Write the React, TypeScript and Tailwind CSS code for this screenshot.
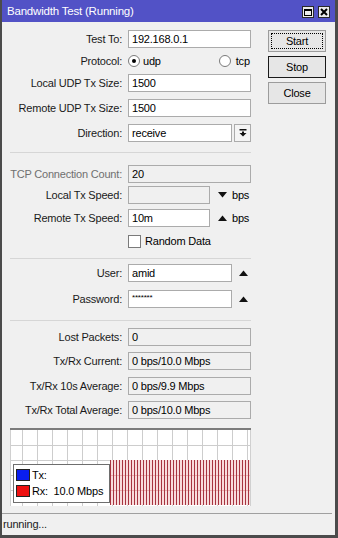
import React from 'react';

type RowProps = { label: string; className?: string; dim?: boolean; children: React.ReactNode };

function Row({ label, className = '', dim = false, children }: RowProps) {
  return (
    <div className={`flex items-center h-[18px] ${className}`}>
      <span className={`w-[120px] text-right whitespace-nowrap ${dim ? 'text-[#6f6f6f]' : 'text-[#1a1a1a]'}`}>{label}</span>
      <div className="ml-[6px] flex items-center">{children}</div>
    </div>
  );
}

function Field({ value, w = 'w-[123px]', disabled = false, small = false }: { value?: string; w?: string; disabled?: boolean; small?: boolean }) {
  return (
    <div className={`${w} h-[18px] border border-[#ababab] pl-[3px] whitespace-nowrap overflow-hidden ${small ? 'text-[8px] leading-[14px]' : 'leading-[16px]'} ${disabled ? 'bg-[#f0f0f0]' : 'bg-white'}`}>
      {value}
    </div>
  );
}

const Tri = ({ up }: { up?: boolean }) => (
  <svg width="9" height="6" viewBox="0 0 9 6">
    {up ? <polygon points="0,6 9,6 4.5,0.5" fill="#111" /> : <polygon points="0,0 9,0 4.5,5.5" fill="#111" />}
  </svg>
);

const Separator = ({ className }: { className: string }) => (
  <div className={`ml-[8px] w-[241px] h-px bg-[#d6d6d6] ${className}`} />
);

function Radio({ checked }: { checked?: boolean }) {
  return (
    <div className="w-[12px] h-[12px] rounded-full border border-[#7a7a7a] bg-white flex items-center justify-center">
      {checked && <div className="w-[4px] h-[4px] rounded-full bg-black" />}
    </div>
  );
}

function Graph() {
  const vlines = Array.from({ length: 16 }, (_, i) => 12 + i * 15);
  const hlines = [17, 32, 47, 62];
  const stripes = Array.from({ length: 47 }, (_, i) => 100 + i * 3);
  return (
    <div className="relative ml-[8px] mt-[9px] w-[241px] h-[78px]">
      <svg width="241" height="78" viewBox="0 0 241 78" className="block">
        <rect x="0" y="0" width="241" height="78" fill="#fff" />
        {vlines.map((x) => (
          <line key={`v${x}`} x1={x + 0.5} y1="2" x2={x + 0.5} y2="78" stroke="#cdcdcd" />
        ))}
        {hlines.map((y) => (
          <line key={`h${y}`} x1="0" y1={y + 0.5} x2="241" y2={y + 0.5} stroke="#cdcdcd" />
        ))}
        <rect x="100" y="32" width="141" height="45" fill="#f8dcdc" />
        {[47, 62].map((y) => (
          <line key={`r${y}`} x1="100" y1={y + 0.5} x2="241" y2={y + 0.5} stroke="#eab0b0" />
        ))}
        {stripes.map((x) => (
          <line key={`s${x}`} x1={x + 0.5} y1="32" x2={x + 0.5} y2="77" stroke="#a63440" />
        ))}
        <line x1="0.5" y1="0" x2="0.5" y2="78" stroke="#d0d0d0" />
        <line x1="240.5" y1="0" x2="240.5" y2="78" stroke="#d0d0d0" />
        <rect x="0" y="0" width="241" height="2" fill="#7c7c7c" />
      </svg>
      <div className="absolute left-[3px] top-[36px] w-[97px] h-[39px] bg-white border border-[#6e6e6e] px-[2px] pt-[3px]">
        <div className="flex items-center h-[14px]">
          <div className="w-[14px] h-[12px] bg-[#0a1ef0] border border-[#222]" />
          <span className="ml-[2px] text-black">Tx:</span>
        </div>
        <div className="flex items-center h-[14px] mt-[2px]">
          <div className="w-[14px] h-[12px] bg-[#ee1111] border border-[#222]" />
          <span className="ml-[2px] text-black whitespace-pre">Rx:  10.0 Mbps</span>
        </div>
      </div>
    </div>
  );
}

export default function App() {
  return (
    <div className="w-[338px] h-[538px] flex flex-col bg-[#f0f0f0] border-l-2 border-r-[3px] border-b-[3px] border-[#4b4b4b] text-[11px] tracking-[-0.2px] font-['Liberation_Sans',Arial,sans-serif] overflow-hidden">
      {/* title bar */}
      <div className="h-[22px] shrink-0 bg-[#5252c6] flex items-center pl-[5px] pr-[5px]">
        <span className="text-white text-[11.5px] pt-[1px]">Bandwidth Test (Running)</span>
        <div className="ml-auto flex gap-[4px] pt-[2px]">
          <div className="w-[12px] h-[12px] bg-[#ececec] border border-[#2a2a2a] flex items-center justify-center">
            <div className="w-[8px] h-[7px] border border-black border-t-2" />
          </div>
          <div className="w-[12px] h-[12px] bg-[#ececec] border border-[#2a2a2a] flex items-center justify-center">
            <svg width="8" height="8" viewBox="0 0 8 8">
              <path d="M1 1 L7 7 M7 1 L1 7" stroke="#000" strokeWidth="2" />
            </svg>
          </div>
        </div>
      </div>

      {/* body */}
      <div className="flex-1 flex pt-[8px]">
        <div className="w-[249px] flex flex-col">
          <Row label="Test To:">
            <Field value="192.168.0.1" />
          </Row>
          <Row label="Protocol:" className="mt-[4px]">
            <div className="w-[123px] flex items-center">
              <Radio checked />
              <span className="ml-[3px]">udp</span>
              <div className="ml-[58px]">
                <Radio />
              </div>
              <span className="ml-[5px]">tcp</span>
            </div>
          </Row>
          <Row label="Local UDP Tx Size:" className="mt-[4px]">
            <Field value="1500" />
          </Row>
          <Row label="Remote UDP Tx Size:" className="mt-[7px]">
            <Field value="1500" />
          </Row>
          <Row label="Direction:" className="mt-[7px]">
            <Field value="receive" w="w-[104px]" />
            <div className="ml-[2px] w-[17px] h-[18px] border border-[#ababab] bg-[#f4f4f4] flex items-center justify-center">
              <svg width="8" height="8" viewBox="0 0 8 8">
                <rect x="0.5" y="0" width="7" height="1.5" fill="#111" />
                <rect x="3" y="2.5" width="2" height="2" fill="#111" />
                <polygon points="0.5,4 7.5,4 4,7.5" fill="#111" />
              </svg>
            </div>
          </Row>

          <Separator className="mt-[10px]" />

          <Row label="TCP Connection Count:" dim className="mt-[12px]">
            <Field value="20" disabled />
          </Row>
          <Row label="Local Tx Speed:" className="mt-[3px]">
            <Field w="w-[82px]" disabled />
            <div className="ml-[8px]"><Tri /></div>
            <span className="ml-[5px]">bps</span>
          </Row>
          <Row label="Remote Tx Speed:" className="mt-[5px]">
            <Field value="10m" w="w-[82px]" />
            <div className="ml-[8px]"><Tri up /></div>
            <span className="ml-[5px]">bps</span>
          </Row>
          <div className="flex items-center h-[13px] mt-[8px] ml-[126px]">
            <div className="w-[13px] h-[13px] border border-[#7a7a7a] bg-white" />
            <span className="ml-[4px]">Random Data</span>
          </div>

          <Separator className="mt-[10px]" />

          <Row label="User:" className="mt-[5px]">
            <Field value="amid" w="w-[104px]" />
            <div className="ml-[7px]"><Tri up /></div>
          </Row>
          <Row label="Password:" className="mt-[8px]">
            <Field value="*******" w="w-[104px]" small />
            <div className="ml-[7px]"><Tri up /></div>
          </Row>

          <Separator className="mt-[12px]" />

          <Row label="Lost Packets:" className="mt-[7px]">
            <Field value="0" disabled />
          </Row>
          <Row label="Tx/Rx Current:" className="mt-[6px]">
            <Field value="0 bps/10.0 Mbps" disabled />
          </Row>
          <Row label="Tx/Rx 10s Average:" className="mt-[7px]">
            <Field value="0 bps/9.9 Mbps" disabled />
          </Row>
          <Row label="Tx/Rx Total Average:" className="mt-[6px]">
            <Field value="0 bps/10.0 Mbps" disabled />
          </Row>

          <Graph />
        </div>

        {/* buttons */}
        <div className="ml-[17px] w-[58px] flex flex-col">
          <button className="h-[22px] bg-[#e6e6e6] border border-[#9c9c9c] p-[2px] text-black">
            <div className="h-full border border-dotted border-black flex items-center justify-center">Start</div>
          </button>
          <button className="mt-[4px] h-[22px] bg-[#e6e6e6] border border-[#1a1a1a] text-black flex items-center justify-center">Stop</button>
          <button className="mt-[4px] h-[22px] bg-[#e6e6e6] border border-[#9c9c9c] text-black flex items-center justify-center">Close</button>
        </div>
      </div>

      {/* status bar */}
      <div className="h-[22px] shrink-0 mr-[3px] border-t border-[#a0a0a0] pl-[1px] pt-[2px] text-[#1a1a1a]">running...</div>
    </div>
  );
}
